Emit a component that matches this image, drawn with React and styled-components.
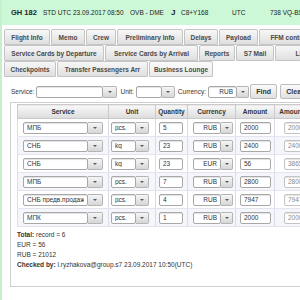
import React from 'react'
import styled, { createGlobalStyle } from 'styled-components'

const GlobalStyle = createGlobalStyle`
  html, body {
    margin: 0;
    padding: 0;
    overflow: hidden;
    background: #ffffff;
  }
  body {
    font-family: "Liberation Sans", Arial, sans-serif;
    color: #333333;
  }
`

const tabRows = [
  [
    { label: 'Flight Info', width: 46 },
    { label: 'Memo', width: 34 },
    { label: 'Crew', width: 30 },
    { label: 'Preliminary Info', width: 66 },
    { label: 'Delays', width: 34 },
    { label: 'Payload', width: 39 },
    { label: 'FFM control', width: 60 },
  ],
  [
    { label: 'Service Cards by Departure', width: 100 },
    { label: 'Service Cards by Arrival', width: 93 },
    { label: 'Reports', width: 36 },
    { label: 'S7 Mail', width: 38 },
    { label: 'Limits', width: 60 },
  ],
  [
    { label: 'Checkpoints', width: 52 },
    { label: 'Transfer Passengers Arr', width: 91 },
    { label: 'Business Lounge', width: 64, active: true },
  ],
]

const rows = [
  { service: 'МПБ', unit: 'pcs.', qty: '5', currency: 'RUB', amount: '2000', total: '2000' },
  { service: 'СНБ', unit: 'kg', qty: '23', currency: 'RUB', amount: '2400', total: '2400' },
  { service: 'СНБ', unit: 'kg', qty: '23', currency: 'EUR', amount: '56', total: '3865' },
  { service: 'МПБ', unit: 'pcs.', qty: '7', currency: 'RUB', amount: '2800', total: '2800' },
  { service: 'СНБ предв.продажа', unit: 'pcs.', qty: '4', currency: 'RUB', amount: '7947', total: '7947' },
  { service: 'МПК', unit: 'pcs.', qty: '1', currency: 'RUB', amount: '2000', total: '2000' },
]

const Combo = ({ value, width, buttonWidth = 13, align }) => (
  <ComboBox>
    <Input width={width} align={align} value={value} readOnly />
    <DropButton width={buttonWidth}>
      <Arrow />
    </DropButton>
  </ComboBox>
)

export default function App() {
  return (
    <>
      <GlobalStyle />
      <Page>
        <FlightBar>
          <Field width={32} bold size={7.5}>GH 182</Field>
          <Field width={87}>STD UTC 23.09.2017 08:50</Field>
          <Field width={41}>OVB - DME</Field>
          <Field width={10} bold size={8}>J</Field>
          <Field width={51}>C8+Y168</Field>
          <Field width={38}>UTC</Field>
          <Field width={60}>738 VQ-BSH</Field>
        </FlightBar>

        <Tabs>
          {tabRows.map((row, i) => (
            <TabRow key={i}>
              {row.map((tab) => (
                <Tab key={tab.label} width={tab.width} active={tab.active}>
                  {tab.label}
                </Tab>
              ))}
            </TabRow>
          ))}
        </Tabs>

        <Filters>
          <Label>Service:</Label>
          <Combo value="" width={67} buttonWidth={14} />
          <Label>Unit:</Label>
          <Combo value="" width={26} />
          <Label>Currency:</Label>
          <Combo value="RUB" width={29} buttonWidth={12} align="right" />
          <Button width={27}>Find</Button>
          <Button width={30}>Clear</Button>
        </Filters>

        <Panel>
          <Table>
            <colgroup>
              <col style={{ width: 91 }} />
              <col style={{ width: 47 }} />
              <col style={{ width: 32 }} />
              <col style={{ width: 48 }} />
              <col style={{ width: 39 }} />
              <col style={{ width: 50 }} />
            </colgroup>
            <thead>
              <tr>
                <Th>Service</Th>
                <Th>Unit</Th>
                <Th>Quantity</Th>
                <Th>Currency</Th>
                <Th>Amount</Th>
                <Th>Amount RUB</Th>
              </tr>
            </thead>
            <tbody>
              {rows.map((r, i) => (
                <Tr key={i} striped={i % 2 === 1}>
                  <Td pad={5}>
                    <Combo value={r.service} width={65} buttonWidth={15} />
                  </Td>
                  <Td pad={2}>
                    <Combo value={r.unit} width={25} />
                  </Td>
                  <Td pad={3}>
                    <Input width={24} value={r.qty} readOnly />
                  </Td>
                  <Td pad={5}>
                    <Combo value={r.currency} width={28} buttonWidth={12} align="right" />
                  </Td>
                  <Td pad={4}>
                    <Input width={31} value={r.amount} readOnly />
                  </Td>
                  <Td pad={9}>
                    <Input width={36} value={r.total} readOnly disabled />
                  </Td>
                </Tr>
              ))}
            </tbody>
          </Table>

          <Totals>
            <div><b>Total:</b> record = 6</div>
            <div>EUR = 56</div>
            <div>RUB = 21012</div>
            <div><b>Checked by:</b> l.ryzhakova@group.s7 23.09.2017 10:50(UTC)</div>
          </Totals>
        </Panel>
      </Page>
    </>
  )
}

const Page = styled.div`
  width: 300px;
  height: 300px;
  overflow: hidden;
  box-sizing: border-box;
  border-left: 2px solid #c8efcb;
`

const FlightBar = styled.div`
  display: flex;
  align-items: center;
  height: 25px;
  margin-left: -2px;
  padding-left: 11px;
  background: #cdf8d7;
  white-space: nowrap;
`

const Field = styled.span`
  flex: 0 0 ${({ width }) => width}px;
  font-size: ${({ size }) => size || 6.5}px;
  font-weight: ${({ bold }) => (bold ? 'bold' : 'normal')};
  color: #222222;
`

const Tabs = styled.div`
  margin-top: 4px;
  padding-left: 2px;
`

const TabRow = styled.div`
  display: flex;
  gap: 1px;
  height: 16px;
  white-space: nowrap;
`

const Tab = styled.div`
  flex: 0 0 ${({ width }) => width}px;
  box-sizing: border-box;
  height: 16px;
  display: flex;
  align-items: center;
  justify-content: center;
  border: 1px solid #c4c4c4;
  border-radius: 2px 2px 0 0;
  background: ${({ active }) =>
    active
      ? 'linear-gradient(#fbfbfb, #ebebeb)'
      : 'linear-gradient(#f7f7f7, #dfdfdf)'};
  font-size: 6.5px;
  font-weight: bold;
  color: #4a4a4a;
  overflow: hidden;
`

const Filters = styled.div`
  display: flex;
  align-items: center;
  height: 15px;
  margin-top: 7px;
  padding-left: 9px;
  white-space: nowrap;
`

const Label = styled.span`
  font-size: 6.5px;
  color: #333333;
  margin-right: 2px;
  margin-left: 3px;
  &:first-child {
    margin-left: 0;
  }
`

const ComboBox = styled.span`
  display: inline-flex;
  align-items: stretch;
  height: 12px;
`

const Input = styled.input`
  box-sizing: border-box;
  width: ${({ width }) => width}px;
  height: 12px;
  margin: 0;
  padding: 0 3px;
  border: 1px solid #a8a8a8;
  border-radius: 2px;
  box-shadow: inset 0 1px 1px rgba(0, 0, 0, 0.12);
  background: #ffffff;
  font-family: "Liberation Sans", Arial, sans-serif;
  font-size: 6.5px;
  color: #333333;
  text-align: ${({ align }) => align || 'left'};
  outline: none;
  &:disabled {
    color: #8a8a8a;
    border-color: #c4c4c4;
    background: #ffffff;
  }
`

const DropButton = styled.span`
  box-sizing: border-box;
  width: ${({ width }) => width}px;
  display: flex;
  align-items: center;
  justify-content: center;
  border: 1px solid #b4b4b4;
  border-left: none;
  border-radius: 0 2px 2px 0;
  background: linear-gradient(#f6f6f6, #d6d6d6);
`

const Arrow = styled.span`
  width: 0;
  height: 0;
  border-left: 2px solid transparent;
  border-right: 2px solid transparent;
  border-top: 2px solid #4a5a70;
`

const Button = styled.span`
  box-sizing: border-box;
  flex: 0 0 ${({ width }) => width}px;
  height: 15px;
  margin-left: 1px;
  margin-right: 2px;
  display: flex;
  align-items: center;
  justify-content: center;
  border: 1px solid #bdbdbd;
  border-radius: 2px;
  background: linear-gradient(#fbfbfb, #e0e0e0);
  font-size: 7px;
  font-weight: bold;
  color: #333333;
`

const Panel = styled.div`
  box-sizing: border-box;
  width: 300px;
  height: 185px;
  margin-top: 3px;
  margin-left: 8px;
  padding: 1px 0 0 6px;
  border: 1px solid #cfcfcf;
  border-right: none;
`

const Table = styled.table`
  table-layout: fixed;
  width: 307px;
  border-collapse: collapse;
  border: 1px solid #d2d2dc;
`

const Th = styled.th`
  height: 13px;
  padding: 0;
  border: 1px solid #cacaca;
  background: linear-gradient(#f8f8f8, #dcdcdc);
  font-size: 6.5px;
  font-weight: bold;
  color: #333333;
  text-align: center;
  white-space: nowrap;
  overflow: hidden;
`

const Tr = styled.tr`
  height: 18px;
  background: ${({ striped }) => (striped ? '#f5f5fc' : '#ffffff')};
`

const Td = styled.td`
  padding: 0 0 0 ${({ pad }) => pad}px;
  border-left: 1px solid #dcdce6;
  border-right: 1px solid #dcdce6;
  border-bottom: 1px solid #e4e4ee;
  white-space: nowrap;
  overflow: hidden;
  vertical-align: middle;
  line-height: 0;
`

const Totals = styled.div`
  margin-top: 3px;
  padding-left: 0;
  font-size: 6.5px;
  line-height: 10px;
  color: #333333;
  white-space: nowrap;
  b {
    font-weight: bold;
  }
`
